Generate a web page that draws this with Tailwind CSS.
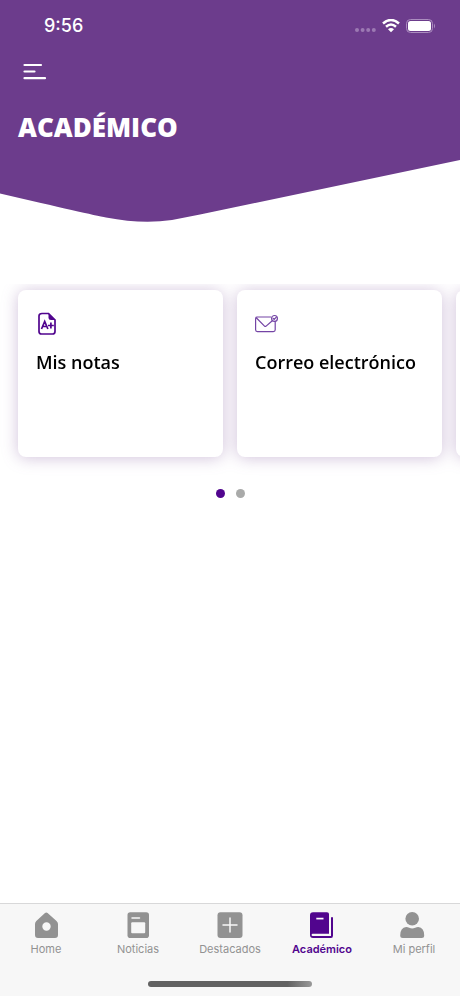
<!DOCTYPE html>
<html lang="es">
<head>
<meta charset="utf-8">
<meta name="viewport" content="width=device-width, initial-scale=1">
<title>Académico</title>
<script src="https://cdn.jsdelivr.net/npm/@tailwindcss/browser@4"></script>
</head>
<body class="flex min-h-screen flex-col bg-white font-['Open_Sans',sans-serif]">
  <header class="relative isolate h-[222px] text-white">
    <svg class="absolute inset-0 -z-10 h-full w-full" viewBox="0 0 460 222" preserveAspectRatio="none" aria-hidden="true">
      <path fill="#6c3c8c" d="M0 0H460V160L200 214.500L172 220Q142 224.500 106 217.500Q90 214.500 0 193.500Z"/>
    </svg>
    <div class="flex h-[52px] items-center justify-between pr-6 pl-11">
      <span class="font-['Inter',sans-serif] text-lg font-medium">9:56</span>
      <div class="flex items-center gap-[6px]">
        <svg class="mt-2 h-1 w-[21px]" viewBox="0 0 21 4" fill="#9c79b3" aria-hidden="true"><circle cx="2" cy="2" r="2"/><circle cx="7.6" cy="2" r="2"/><circle cx="13.2" cy="2" r="2"/><circle cx="18.8" cy="2" r="2"/></svg>
        <svg class="h-[14px] w-[18px]" viewBox="0 0 18 14" fill="none" stroke="#fff" stroke-width="2.5" aria-hidden="true"><path d="M1 4.500Q9-2.500 17 4.500M4 7.800Q9 3.300 14 7.800"/><path fill="#fff" stroke="none" d="M6 10.200Q9 7.800 12 10.200L9 13.200Z"/></svg>
        <svg class="h-[14px] w-[30px]" viewBox="0 0 30 14" aria-hidden="true"><rect x=".5" y=".5" width="26" height="13" rx="4" fill="none" stroke="#ab8dbf"/><rect x="2" y="2" width="23" height="10" rx="2.5" fill="#fff"/><path fill="#ab8dbf" d="M28 4.5Q30 7 28 9.5Z"/></svg>
      </div>
    </div>
    <div class="px-[18px]">
      <button type="button" aria-label="Abrir menú" class="flex h-10 w-8 items-center pl-[5px]">
        <svg class="h-[18px] w-[24px]" viewBox="0 0 24 18" fill="none" stroke="#fff" stroke-width="2.2" stroke-linecap="round" aria-hidden="true"><path d="M1.5 2H18M1.500 8.500H11.500M1.500 15.200H22"/></svg>
      </button>
      <h1 class="mt-[17px] text-[26px] leading-9 font-extrabold">ACADÉMICO</h1>
    </div>
  </header>

  <main class="flex-1 pt-[62px]">
    <div class="overflow-hidden pt-[6px] pb-6">
      <ul class="flex gap-[14px] pl-[18px] drop-shadow-[0_1px_8px_#6c3c8c50]">
        <li class="w-[calc(50%-16px)] shrink-0">
          <a href="#notas" class="flex h-[167px] flex-col items-start rounded-lg bg-white p-[18px] text-black">
            <svg class="mt-1 h-6 w-6" viewBox="0 0 24 24" aria-hidden="true"><path d="M6 1.500H12.500L19 8V19.500Q19 22 16.500 22H5.500Q3 22 3 19.500V4Q3 1.500 6 1.500Z" fill="none" stroke="#51058e" stroke-width="1.7"/><path fill="#51058e" d="M12.500 1L19.700 8H15Q12.500 8 12.500 6Z"/><path d="M5.500 17L8.700 9.500L11.900 17M6.800 14.500H10.600M12 13.500H17.800M14.900 10.600V16.400" fill="none" stroke="#51058e" stroke-width="1.7"/></svg>
            <span class="mt-[14px] text-lg leading-6 font-semibold">Mis notas</span>
          </a>
        </li>
        <li class="w-[calc(50%-16px)] shrink-0">
          <a href="#correo" class="flex h-[167px] flex-col items-start rounded-lg bg-white p-[18px] text-black">
            <svg class="mt-1 h-6 w-6" viewBox="0 0 24 24" fill="none" stroke="#7444a5" stroke-width="1.2" stroke-linecap="round" aria-hidden="true"><path d="M16 5H2Q.6 5 .6 6.800V17.800Q.6 19.600 2.400 19.600H18.300Q20.200 19.600 20.200 17.800V9.500M1 5.500L9.500 14.100Q10.300 14.800 11.100 14.100L17 9"/><circle cx="19.500" cy="6.400" r="2.900"/><path d="M18.200 6.500L19.200 7.400L21.300 5.200"/></svg>
            <span class="mt-[14px] text-lg leading-6 font-semibold">Correo electrónico</span>
          </a>
        </li>
        <li class="w-[calc(50%-16px)] shrink-0"><div class="h-[167px] rounded-lg bg-white"></div></li>
      </ul>
    </div>
    <div class="mt-2 flex justify-center gap-[11px]">
      <button type="button" aria-label="Página 1" aria-current="true" class="h-[9px] w-[9px] rounded-full bg-[#51058e]"></button>
      <button type="button" aria-label="Página 2" class="h-[9px] w-[9px] rounded-full bg-[#a9aaa9]"></button>
    </div>
  </main>

  <footer class="border-t border-[#d8d8d9] bg-[#f7f7f7] pb-[9px] font-['Inter',sans-serif] text-[11px] leading-4 text-[#929292]">
    <nav class="grid grid-cols-5 pt-[7px]">
      <a href="#home" class="flex flex-col items-center gap-[2px]">
        <svg class="h-7 w-7" viewBox="0 0 28 28" aria-hidden="true"><path fill="#929292" fill-rule="evenodd" d="M13 2Q14.300.8 15.600 2L24.500 10Q26 11.300 26 13V24Q26 27 23 27H6Q3 27 3 24V13Q3 11.300 4.300 10ZM14.500 11.300A4.200 4.200 0 1 0 14.500 19.700A4.200 4.200 0 1 0 14.500 11.300Z"/></svg>
        <span>Home</span>
      </a>
      <a href="#noticias" class="flex flex-col items-center gap-[2px]">
        <svg class="h-7 w-7" viewBox="0 0 28 28" aria-hidden="true"><rect x="3.500" y="1.200" width="21.500" height="25.800" rx="2.800" fill="#929292"/><path d="M8 7H15.500" stroke="#f7f7f7" stroke-width="1.500" stroke-linecap="round"/><rect x="7.200" y="11.200" width="14" height="11" rx="1" fill="#f7f7f7"/></svg>
        <span>Noticias</span>
      </a>
      <a href="#destacados" class="flex flex-col items-center gap-[2px]">
        <svg class="h-7 w-7" viewBox="0 0 28 28" aria-hidden="true"><rect x="1.500" y="1.200" width="25" height="25.800" rx="3" fill="#929292"/><path d="M7 14H21M14 7V21" stroke="#f7f7f7" stroke-width="1.500" stroke-linecap="round"/></svg>
        <span>Destacados</span>
      </a>
      <a href="#academico" aria-current="page" class="flex flex-col items-center gap-[2px] font-semibold text-[#51058e]">
        <svg class="h-7 w-7" viewBox="0 0 28 28" fill="#51058e" aria-hidden="true"><path d="M5 1.200H19Q21 1.200 21 3V22.800H4.600Q3.600 22.800 3.600 23.900T4.600 25H23V6.200H25V24.500Q25 27 23 27H5Q2 27 2 24V4.200Q2 1.200 5 1.200Z"/><path d="M8.300 7.600H15.500" stroke="#fff" stroke-width="1.700"/></svg>
        <span>Académico</span>
      </a>
      <a href="#perfil" class="flex flex-col items-center gap-[2px]">
        <svg class="h-7 w-7" viewBox="0 0 28 28" fill="#929292" aria-hidden="true"><circle cx="12.200" cy="7.800" r="6.800"/><path d="M.2 24.500Q.2 16.500 6.200 16Q7.700 16 9.200 16.800Q12.200 18.200 15.200 16.800Q16.700 16 18.200 16Q24.200 16.500 24.200 24.500Q24.200 27 21.700 27H2.700Q.2 27 .2 24.500Z"/></svg>
        <span>Mi perfil</span>
      </a>
    </nav>
    <div class="mx-auto mt-[24px] h-[6px] w-[164px] rounded-full bg-linear-to-r from-[#626262] from-85% to-[#999999]"></div>
  </footer>
</body>
</html>
